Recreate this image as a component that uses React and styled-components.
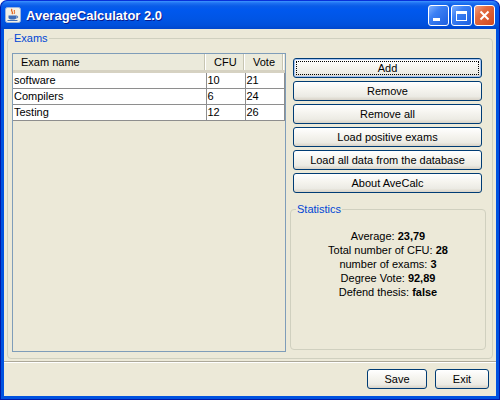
import styled, { createGlobalStyle } from "styled-components";

const GlobalStyle = createGlobalStyle`
  html, body {
    margin: 0;
    padding: 0;
    background: #fff;
  }
  body {
    font-family: "Liberation Sans", Tahoma, sans-serif;
    font-size: 11px;
    color: #000;
  }
`;

const exams = [
  { name: "software", cfu: 10, vote: 21 },
  { name: "Compilers", cfu: 6, vote: 24 },
  { name: "Testing", cfu: 12, vote: 26 },
];

const actions = [
  "Add",
  "Remove",
  "Remove all",
  "Load positive exams",
  "Load all data from the database",
  "About AveCalc",
];

const stats = [
  ["Average:", "23,79"],
  ["Total number of CFU:", "28"],
  ["number of exams:", "3"],
  ["Degree Vote:", "92,89"],
  ["Defend thesis:", "false"],
];

function JavaIcon() {
  return (
    <svg width="16" height="16" viewBox="0 0 16 16">
      <rect x="0.5" y="0.5" width="15" height="15" rx="2" fill="#F4F1E6" stroke="#9DB4DC" />
      <path d="M7 2 C5 4 9 5 7 7" stroke="#E0601A" strokeWidth="1.3" fill="none" />
      <path d="M9.5 3 C8.5 4.5 10.5 5 9 7" stroke="#E0601A" strokeWidth="1" fill="none" />
      <path d="M3.5 8.5 h8 v2 c0 1.5 -1.5 2 -4 2 s-4 -0.5 -4 -2 z" fill="#3E6DB8" />
      <path d="M11.5 9 c1.8 0 1.8 2 0 2" stroke="#3E6DB8" fill="none" />
      <path d="M2.5 13.5 h10" stroke="#3E6DB8" strokeWidth="1" />
    </svg>
  );
}

export default function App() {
  return (
    <>
      <GlobalStyle />
      <Window>
        <TitleBar>
          <JavaIcon />
          <Title>AverageCalculator 2.0</Title>
          <Controls>
            <CaptionButton>
              <MinGlyph />
            </CaptionButton>
            <CaptionButton>
              <MaxGlyph />
            </CaptionButton>
            <CaptionButton $close>
              <svg width="11" height="11" viewBox="0 0 11 11">
                <path d="M1.5 1.5 L9.5 9.5 M9.5 1.5 L1.5 9.5" stroke="#fff" strokeWidth="2" />
              </svg>
            </CaptionButton>
          </Controls>
        </TitleBar>
        <Client>
          <ExamsGroup>
            <Legend $inset="1px">Exams</Legend>
            <Columns>
              <ScrollPane>
                <Table>
                  <colgroup>
                    <col style={{ width: 193 }} />
                    <col style={{ width: 39 }} />
                    <col style={{ width: 39 }} />
                  </colgroup>
                  <thead>
                    <tr>
                      <HeadCell>Exam name</HeadCell>
                      <HeadCell>CFU</HeadCell>
                      <HeadCell>Vote</HeadCell>
                    </tr>
                  </thead>
                  <tbody>
                    {exams.map((e) => (
                      <tr key={e.name}>
                        <Cell>{e.name}</Cell>
                        <Cell>{e.cfu}</Cell>
                        <Cell>{e.vote}</Cell>
                      </tr>
                    ))}
                  </tbody>
                </Table>
              </ScrollPane>
              <Side>
                <ButtonStack>
                  {actions.map((a, i) => (
                    <Button key={a} $focused={i === 0}>
                      {a}
                    </Button>
                  ))}
                </ButtonStack>
                <StatsGroup>
                  <Legend $inset="5px">Statistics</Legend>
                  <StatsList>
                    {stats.map(([label, value]) => (
                      <StatLine key={label}>
                        {label} <b>{value}</b>
                      </StatLine>
                    ))}
                  </StatsList>
                </StatsGroup>
              </Side>
            </Columns>
          </ExamsGroup>
          <Separator />
          <Footer>
            <Button $width="60px">Save</Button>
            <Button $width="54px">Exit</Button>
          </Footer>
        </Client>
      </Window>
    </>
  );
}

const Window = styled.div`
  width: 500px;
  height: 400px;
  box-sizing: border-box;
  display: flex;
  flex-direction: column;
  background: #0052e0;
  border-radius: 7px 7px 0 0;
  border: 1px solid #0019a8;
  border-top-color: #0831d9;
`;

const TitleBar = styled.div`
  height: 28px;
  display: flex;
  align-items: center;
  padding: 0 4px 0 4px;
  border-radius: 7px 7px 0 0;
  background: linear-gradient(
    to bottom,
    #3d95ff 0px,
    #1f72f2 2px,
    #0a5ce8 5px,
    #0058ee 9px,
    #0055e5 18px,
    #0050dc 24px,
    #0046cc 28px
  );
  svg {
    flex-shrink: 0;
  }
`;

const Title = styled.div`
  margin-left: 5px;
  font-family: "Liberation Sans", "Trebuchet MS", sans-serif;
  font-weight: bold;
  font-size: 13px;
  color: #fff;
  text-shadow: 1px 1px 0 #0a1a8a;
  flex: 1;
`;

const Controls = styled.div`
  display: flex;
  gap: 2px;
  margin-top: 1px;
`;

const CaptionButton = styled.div`
  width: 21px;
  height: 21px;
  box-sizing: border-box;
  border: 1px solid #fff;
  border-radius: 3px;
  display: flex;
  align-items: center;
  justify-content: center;
  position: relative;
  background: ${(p) =>
    p.$close
      ? "linear-gradient(135deg, #f0a085 0%, #e26a3f 35%, #d2491f 100%)"
      : "linear-gradient(135deg, #7fb0ff 0%, #3c80f4 35%, #1c5fe0 100%)"};
`;

const MinGlyph = styled.div`
  width: 7px;
  height: 3px;
  background: #fff;
  position: absolute;
  left: 4px;
  bottom: 4px;
`;

const MaxGlyph = styled.div`
  width: 11px;
  height: 10px;
  box-sizing: border-box;
  border: 1px solid #fff;
  border-top-width: 3px;
`;

const Client = styled.div`
  flex: 1;
  margin: 0 3px 3px 3px;
  background: #ece9d8;
  display: flex;
  flex-direction: column;
`;

const Group = styled.fieldset`
  margin: 0;
  min-width: 0;
  box-sizing: border-box;
  border: 1px solid #d0d0bf;
  border-radius: 4px;
`;

const ExamsGroup = styled(Group)`
  margin: 3px 3px 0 3px;
  height: 327px;
  padding: 8px 6px 5px 4px;
`;

const Legend = styled.legend`
  color: #0046d5;
  padding: 0 1px;
  margin-left: ${(p) => p.$inset};
  font-size: 11px;
  line-height: 13px;
`;

const Columns = styled.div`
  display: flex;
  gap: 4px;
  height: 100%;
`;

const ScrollPane = styled.div`
  width: 274px;
  box-sizing: border-box;
  border: 1px solid #7f9db9;
  background: #ece9d8;
  height: 299px;
`;

const Table = styled.table`
  border-collapse: collapse;
  table-layout: fixed;
  width: 271px;
`;

const HeadCell = styled.th`
  height: 16px;
  padding: 0 0 0 8px;
  text-align: left;
  font-weight: normal;
  background: #ebeadb;
  border-bottom: 3px solid #d6d2c2;
  box-shadow: inset -1px 0 0 #fff, inset -2px 0 0 #c7c5b2;
  white-space: nowrap;
  overflow: hidden;
`;

const Cell = styled.td`
  height: 15px;
  padding: 0 0 0 1px;
  background: #fff;
  border-right: 1px solid #8e8e8e;
  border-bottom: 1px solid #8e8e8e;
  white-space: nowrap;
  overflow: hidden;
  line-height: 15px;
`;

const Side = styled.div`
  flex: 1;
  display: flex;
  flex-direction: column;
`;

const ButtonStack = styled.div`
  display: flex;
  flex-direction: column;
  gap: 3px;
  padding: 5px 0 0 3px;
`;

const Button = styled.div`
  width: ${(p) => p.$width || "189px"};
  height: 20px;
  box-sizing: border-box;
  border: 1px solid #003c74;
  border-radius: 3px;
  background: linear-gradient(to bottom, #ffffff 0%, #f6f5f0 40%, #ecebe4 80%, #d8d3c8 100%);
  display: flex;
  align-items: center;
  justify-content: center;
  font-size: 11px;
  box-shadow: ${(p) => (p.$focused ? "inset 0 0 0 1px #a7c4f3" : "none")};
  outline: ${(p) => (p.$focused ? "1px dotted #000" : "none")};
  outline-offset: -4px;
`;

const StatsGroup = styled(Group)`
  margin-top: 10px;
  flex: 1;
  padding: 13px 0 0 0;
  margin-bottom: 2px;
`;

const StatsList = styled.div`
  display: flex;
  flex-direction: column;
  align-items: center;
`;

const StatLine = styled.div`
  line-height: 14px;
  b {
    font-weight: bold;
  }
`;

const Separator = styled.div`
  margin-top: 2px;
  border-top: 1px solid #aca899;
  border-bottom: 1px solid #fff;
`;

const Footer = styled.div`
  display: flex;
  justify-content: flex-end;
  gap: 8px;
  padding: 6px 7px 0 0;
`;
